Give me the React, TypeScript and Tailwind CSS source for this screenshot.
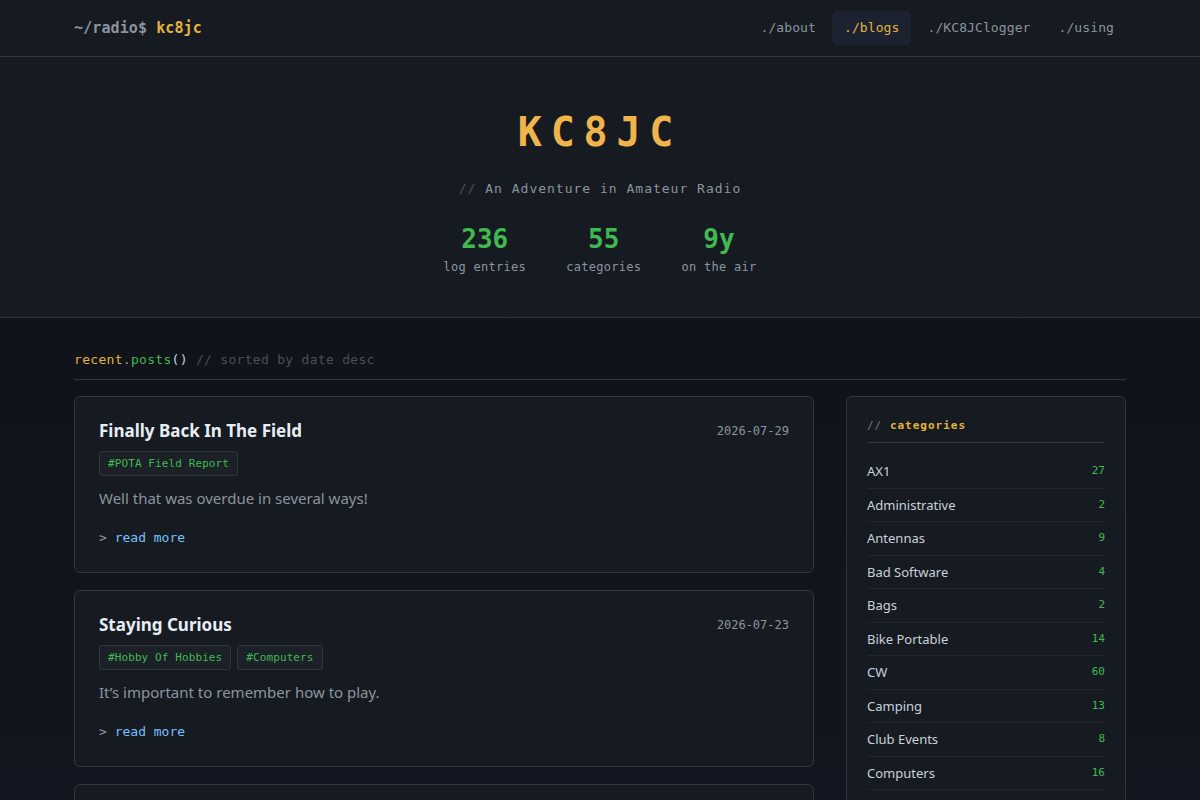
import { FC } from 'react';

const mono = "font-['DejaVu_Sans_Mono',monospace]";
const sans = "font-['Noto_Sans',sans-serif]";

interface Post {
    title: string;
    date: string;
    tags: string[];
    excerpt: string;
}

const posts: Post[] = [
    { title: 'Finally Back In The Field', date: '2026-07-29', tags: ['POTA Field Report'], excerpt: 'Well that was overdue in several ways!' },
    { title: 'Staying Curious', date: '2026-07-23', tags: ['Hobby Of Hobbies', 'Computers'], excerpt: 'It\u2019s important to remember how to play.' },
    { title: 'Portable Ops Notes', date: '2026-07-15', tags: ['CW'], excerpt: 'More notes from the bench.' },
];

const categories: [string, number][] = [
    ['AX1', 27],
    ['Administrative', 2],
    ['Antennas', 9],
    ['Bad Software', 4],
    ['Bags', 2],
    ['Bike Portable', 14],
    ['CW', 60],
    ['Camping', 13],
    ['Club Events', 8],
    ['Computers', 16],
    ['Contests', 5],
];

const navLinks = ['./about', './blogs', './KC8JClogger', './using'];

const Header: FC = () => (
    <header className="h-[57px] bg-[#161b22] border-b border-[#30363d]">
        <div className="max-w-[1100px] mx-auto px-6 h-full flex items-center justify-between">
            <div className={`${mono} text-[15px] font-bold tracking-[0.1px]`}>
                <span className="text-[#8b949e]">~/radio$ </span>
                <span className="text-[#e3b341]">kc8jc</span>
            </div>
            <nav className={`${mono} text-[13px] tracking-[0.1px] flex items-center gap-1`}>
                {navLinks.map((link) => (
                    <a
                        key={link}
                        className={`px-3 py-[7px] rounded-md leading-5 ${link === './blogs' ? 'bg-[#1c2230] text-[#e3b341]' : 'text-[#8b949e]'}`}
                    >
                        {link}
                    </a>
                ))}
            </nav>
        </div>
    </header>
);

const Hero: FC = () => (
    <section className="bg-[#161b22] border-b border-[#30363d] h-[261px] flex flex-col items-center">
        <h1 className={`${mono} text-[40px] font-bold text-[#f0b44c] tracking-[0.22em] mt-[49px] leading-[52px]`}>KC8JC</h1>
        <p className={`${mono} text-[13px] tracking-[1px] text-[#8b949e] mt-[21px] leading-5`}>
            <span className="text-[#484f58]">//</span> An Adventure in Amateur Radio
        </p>
        <div className={`${mono} flex gap-10 mt-[24px]`}>
            {[
                ['236', 'log entries'],
                ['55', 'categories'],
                ['9y', 'on the air'],
            ].map(([n, l]) => (
                <div key={l} className="flex flex-col items-center">
                    <span className="text-[26px] font-bold text-[#3fb950] leading-8">{n}</span>
                    <span className="text-[12px] tracking-[0.3px] text-[#8b949e] leading-4 mt-[4px]">{l}</span>
                </div>
            ))}
        </div>
    </section>
);

const PostCard: FC<{ post: Post }> = ({ post }) => (
    <article className="bg-[#161b22] border border-[#30363d] rounded-md px-6 pt-6 pb-6">
        <div className="flex items-start justify-between">
            <h2 className={`${sans} text-[17px] font-bold text-[#e6edf3] leading-[20px]`}>{post.title}</h2>
            <span className={`${mono} text-[12px] text-[#8b949e] leading-5`}>{post.date}</span>
        </div>
        <div className="flex gap-1.5 mt-2.5">
            {post.tags.map((t) => (
                <span key={t} className={`${mono} text-[11px] tracking-[0.1px] text-[#3fb950] bg-[#1c2128] border border-[#30363d] rounded-[3px] px-2 leading-[23px]`}>
                    #{t}
                </span>
            ))}
        </div>
        <p className={`${sans} text-[15px] text-[#8b949e] leading-6 mt-[10px]`}>{post.excerpt}</p>
        <div className={`${mono} text-[13px] leading-5 mt-[18px]`}>
            <span className="text-[#8b949e]">&gt; </span>
            <span className="text-[#79c0ff]">read more</span>
        </div>
    </article>
);

const Sidebar: FC = () => (
    <aside className="bg-[#161b22] border border-[#30363d] rounded-md px-5 pt-[23px] pb-3 self-start">
        <div className={`${mono} text-[11px] font-bold tracking-[1px] leading-3 pb-[10px] border-b border-[#30363d]`}>
            <span className="text-[#6e7681] font-normal">// </span>
            <span className="text-[#e3b341]">categories</span>
        </div>
        <ul className="mt-3">
            {categories.map(([name, count]) => (
                <li key={name} className="flex items-center justify-between py-[7px] border-b border-[#21262d]">
                    <span className={`${sans} text-[13px] text-[#c9d1d9] leading-[18.5px]`}>{name}</span>
                    <span className={`${mono} text-[11px] text-[#3fb950]`}>{count}</span>
                </li>
            ))}
        </ul>
    </aside>
);

export default function App() {
    return (
        <div className="min-h-screen bg-gradient-to-b from-[#0f1116] to-[#131722]">
            <Header />
            <Hero />
            <main className="max-w-[1100px] mx-auto px-6 pt-[32px] pb-10">
                <div className={`${mono} text-[13px] tracking-[0.3px] leading-5 pb-[9px] border-b border-[#30363d]`}>
                    <span className="text-[#e3b341]">recent</span>
                    <span className="text-[#8b949e]">.</span>
                    <span className="text-[#3fb950]">posts</span>
                    <span className="text-[#c9d1d9]">()</span>
                    <span className="text-[#484f58]"> // sorted by date desc</span>
                </div>
                <div className="grid grid-cols-[1fr_280px] gap-8 mt-4">
                    <div className="flex flex-col gap-[17px]">
                        {posts.map((p) => (
                            <PostCard key={p.title} post={p} />
                        ))}
                    </div>
                    <Sidebar />
                </div>
            </main>
        </div>
    );
}
